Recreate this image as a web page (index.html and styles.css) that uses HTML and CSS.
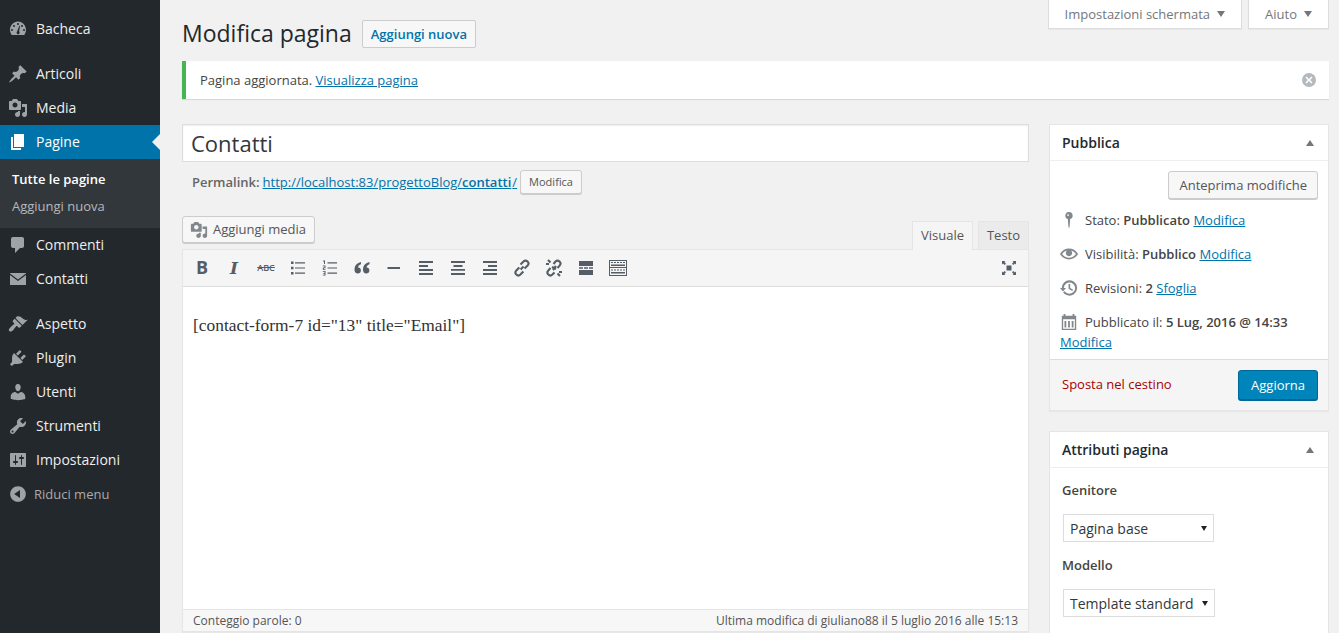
FILE: index.html
```html
<!DOCTYPE html>
<html lang="it">
<head>
<meta charset="utf-8">
<title>Modifica pagina</title>
<link rel="stylesheet" href="styles.css">
</head>
<body>
<div class="app">
  <nav class="side">
    <ul class="menu">
      <li class="item"><svg class="mi" viewBox="0 0 20 20"><path fill-rule="evenodd" d="M3.76 16h12.48c1.1-1.43 1.76-3.21 1.76-5.14 0-4.67-3.58-8.46-8-8.46s-8 3.79-8 8.46c0 1.93.66 3.71 1.76 5.14zM10 4a1 1 0 1 1 0 2 1 1 0 0 1 0-2zM6 6a1 1 0 1 1 0 2 1 1 0 0 1 0-2zm8 0a1 1 0 1 1 0 2 1 1 0 0 1 0-2zM4 10a1 1 0 1 1 0 2 1 1 0 0 1 0-2zm12 0a1 1 0 1 1 0 2 1 1 0 0 1 0-2zM11.5 6.5L12 7l-.9 5.6a1.5 1.5 0 1 1-2 0z"/></svg>Bacheca</li>
      <li class="item gap"><svg class="mi" viewBox="0 0 20 20"><path d="M10.44 3.02l1.82-1.82 6.36 6.35-1.83 1.82c-1.05-.68-2.48-.57-3.41.36l-.75.75c-.92.93-1.04 2.35-.35 3.41l-1.83 1.82-2.41-2.41-2.8 2.79c-.42.42-3.38 2.71-3.8 2.29s1.86-3.39 2.28-3.81l2.79-2.79L4.1 9.36l1.83-1.82c1.05.69 2.48.57 3.4-.36l.75-.75c.93-.92 1.05-2.35.36-3.41z"/></svg>Articoli</li>
      <li class="item"><svg class="mi" viewBox="0 0 20 20"><path fill-rule="evenodd" d="M13 11V4c0-.55-.45-1-1-1h-1.67L9 1H5L3.67 3H2c-.55 0-1 .45-1 1v7c0 .55.45 1 1 1h10c.55 0 1-.45 1-1zM7 4.5c1.38 0 2.5 1.12 2.5 2.5S8.38 9.5 7 9.5 4.5 8.38 4.5 7 5.62 4.5 7 4.5zM14 6h5v10.5c0 1.38-1.12 2.5-2.5 2.5S14 17.88 14 16.5s1.12-2.5 2.5-2.5c.17 0 .34.02.5.05V9h-3V6zm-4 8.05V13h2v3.5c0 1.38-1.12 2.5-2.5 2.5S7 17.88 7 16.5 8.12 14 9.5 14c.17 0 .34.02.5.05z"/></svg>Media</li>
      <li class="item current"><svg class="mi" viewBox="0 0 20 20"><path d="M6 15V2h10v13H6zm-1 1h8v2H3V5h2v11z"/></svg>Pagine</li>
      <li class="sub">
        <div class="sub-link sub-on">Tutte le pagine</div>
        <div class="sub-link">Aggiungi nuova</div>
      </li>
      <li class="item"><svg class="mi" viewBox="0 0 20 20"><path d="M5 2h9c1.1 0 2 .9 2 2v7c0 1.1-.9 2-2 2h-2l-5 5v-5H5c-1.1 0-2-.9-2-2V4c0-1.1.9-2 2-2z"/></svg>Commenti</li>
      <li class="item"><svg class="mi" viewBox="0 0 20 20"><path d="M2 4h16v.5L10 10.500 2 4.500zM2 6l8 6 8-6v10H2z"/></svg>Contatti</li>
      <li class="item gap"><svg class="mi" viewBox="0 0 20 20"><path d="M14.48 11.06L7.41 3.99l1.5-1.5c.5-.56 2.3-.47 3.51.32 1.21.8 1.43 1.28 2.91 2.1 1.18.64 2.45 1.26 4.45.85zm-.71.71L6.7 4.7 4.93 6.47c-.39.39-.39 1.02 0 1.41l1.06 1.06c.39.39.39 1.03 0 1.42-.6.6-1.43 1.11-2.21 1.69-.35.26-.7.53-1.01.84-1.34 1.34-1.99 2.31-1.99 3.16 0 .87.7 1.57 1.57 1.57.85 0 1.82-.65 3.16-1.99.31-.31.58-.66.84-1.01.58-.78 1.09-1.61 1.69-2.21.39-.39 1.03-.39 1.42 0l1.06 1.06c.39.39 1.02.39 1.41 0z"/></svg>Aspetto</li>
      <li class="item"><svg class="mi" viewBox="0 0 20 20"><path d="M13.11 4.36L9.87 7.6 8 5.73l3.24-3.24c.35-.34 1.05-.2 1.56.32.52.51.66 1.21.31 1.55zm-8 1.77l.91-1.12 9.01 9.01-1.19.84c-.71.71-2.63 1.16-3.82 1.16H6.14L4.9 17.26c-.59.59-1.54.59-2.12 0-.59-.58-.59-1.53 0-2.12l1.24-1.24v-3.88c0-1.13.4-3.19 1.09-3.89zm7.26 3.97l3.24-3.24c.34-.35 1.04-.21 1.55.31.52.51.66 1.21.31 1.55l-3.24 3.25z"/></svg>Plugin</li>
      <li class="item"><svg class="mi" viewBox="0 0 20 20"><path d="M10 9.25c-2.27 0-2.73-3.44-2.73-3.44C7 4.02 7.82 2 9.97 2c2.16 0 2.98 2.02 2.71 3.81 0 0-.41 3.44-2.68 3.44zm0 2.57L12.72 10c2.39 0 4.52 2.33 4.52 4.53v2.49s-3.65 1.13-7.24 1.13c-3.65 0-7.24-1.13-7.24-1.13v-2.49c0-2.25 1.94-4.48 4.47-4.48z"/></svg>Utenti</li>
      <li class="item"><svg class="mi" viewBox="0 0 20 20"><path fill-rule="evenodd" d="M16.68 9.77c-1.34 1.34-3.3 1.67-4.95.99l-5.41 6.52c-.99.99-2.59.99-3.58 0s-.99-2.59 0-3.57l6.52-5.42c-.68-1.65-.35-3.61.99-4.95 1.28-1.28 3.12-1.62 4.72-1.06l-2.89 2.89 2.82 2.82 2.86-2.87c.53 1.58.18 3.39-1.08 4.65zM3.81 16.21c.4.39 1.04.39 1.43 0 .4-.4.4-1.04 0-1.43-.39-.4-1.03-.4-1.43 0-.39.39-.39 1.03 0 1.43z"/></svg>Strumenti</li>
      <li class="item"><svg class="mi" viewBox="0 0 20 20"><path fill-rule="evenodd" d="M18 16V4c0-.55-.45-1-1-1H3c-.55 0-1 .45-1 1v12c0 .55.45 1 1 1h14c.55 0 1-.45 1-1zM8 11h1c.55 0 1 .45 1 1s-.45 1-1 1H8v1.5c0 .28-.22.5-.5.5s-.5-.22-.5-.5V13H6c-.55 0-1-.45-1-1s.45-1 1-1h1V5.5c0-.28.22-.5.5-.5s.5.22.5.5V11zm5-2h-1c-.55 0-1-.45-1-1s.45-1 1-1h1V5.5c0-.28.22-.5.5-.5s.5.22.5.5V7h1c.55 0 1 .45 1 1s-.45 1-1 1h-1v5.5c0 .28-.22.5-.5.5s-.5-.22-.5-.5V9z"/></svg>Impostazioni</li>
      <li class="collapse"><svg class="mi" viewBox="0 0 20 20"><path fill-rule="evenodd" d="M10 2.16c4.33 0 7.84 3.51 7.84 7.84s-3.51 7.84-7.84 7.84S2.16 14.33 2.16 10 5.71 2.16 10 2.16zm2 11.72V6.12L6.18 9.97z"/></svg>Riduci menu</li>
    </ul>
  </nav>

  <main class="content">
    <div class="screen-tabs">
      <div class="tab-btn">Impostazioni schermata<span class="caret"></span></div>
      <div class="tab-btn">Aiuto<span class="caret"></span></div>
    </div>
    <header class="head">
      <h1 class="title">Modifica pagina</h1>
      <span class="add-new">Aggiungi nuova</span>
    </header>
    <div class="notice">
      <p class="notice-text">Pagina aggiornata. <a class="link" href="#">Visualizza pagina</a></p>
      <svg class="dismiss" viewBox="0 0 20 20"><path fill-rule="evenodd" d="M10 3a7 7 0 1 1 0 14 7 7 0 0 1 0-14zm3.5 4.6L12.4 6.500 10 8.900 7.600 6.500 6.500 7.600 8.900 10l-2.400 2.400 1.100 1.100 2.400-2.400 2.400 2.400 1.100-1.100L11.100 10z"/></svg>
    </div>
    <div class="columns">
      <section class="main-col">
        <div class="title-input">Contatti</div>
        <div class="permalink">
          <strong class="perma-label">Permalink:</strong>
          <a class="link perma-url" href="#">http://localhost:83/progettoBlog/<b>contatti</b>/</a>
          <span class="btn-small">Modifica</span>
        </div>
        <div class="editor-top">
          <span class="media-btn"><svg class="media-ico" viewBox="0 0 20 20"><path fill-rule="evenodd" d="M13 11V4c0-.55-.45-1-1-1h-1.67L9 1H5L3.67 3H2c-.55 0-1 .45-1 1v7c0 .55.45 1 1 1h10c.55 0 1-.45 1-1zM7 4.5c1.38 0 2.5 1.12 2.5 2.5S8.38 9.5 7 9.5 4.5 8.38 4.5 7 5.62 4.5 7 4.5zM14 6h5v10.5c0 1.38-1.12 2.5-2.5 2.5S14 17.88 14 16.5s1.12-2.5 2.5-2.5c.17 0 .34.02.5.05V9h-3V6zm-4 8.05V13h2v3.5c0 1.38-1.12 2.5-2.5 2.5S7 17.88 7 16.5 8.12 14 9.5 14c.17 0 .34.02.5.05z"/></svg>Aggiungi media</span>
          <div class="tabs">
            <span class="ed-tab ed-on">Visuale</span>
            <span class="ed-tab">Testo</span>
          </div>
        </div>
        <div class="editor">
          <div class="toolbar">
            <div class="tools">
              <span class="tool tool-b">B</span>
              <span class="tool tool-i">I</span>
              <span class="tool tool-abc">ABC</span>
              <span class="tool"><svg class="ti" viewBox="0 0 16 16"><path d="M1 1.500h2.500V4H1zM1 6.800h2.500v2.500H1zM1 12h2.500v2.500H1zM5 2.300h10v1.200H5zM5 7.400h10v1.200H5zM5 12.600h10v1.200H5z"/></svg></span>
              <span class="tool"><svg class="ti" viewBox="0 0 16 16"><path d="M5.500 2.300H15v1.200H5.500zM5.500 7.400H15v1.200H5.500zM5.500 12.600H15v1.200H5.500zM1 .5h2v3.500H2V1.500H1zM.8 5.500h2.700v2.700H1.900v.7h1.600v.8H.8V7.600h1.700V6.300H.8zM.8 11h2.700v4.500H.8v-.8h1.700v-1H1.300v-.7h1.200v-1.200H.8z"/></svg></span>
              <span class="tool"><svg class="ti" viewBox="0 0 16 16"><path d="M7 2C3.200 2.800.5 5.300.5 9.800c0 2.300 1.300 3.700 3.200 3.700s3.200-1.300 3.200-3.100-1.300-3-2.900-2.800C4.200 6 5.300 4.800 7 4.200zM15.500 2c-3.800.8-6.500 3.300-6.500 7.800 0 2.300 1.300 3.700 3.200 3.700s3.200-1.300 3.200-3.100-1.300-3-2.900-2.800c.2-1.600 1.300-2.800 3-3.400z"/></svg></span>
              <span class="tool"><svg class="ti" viewBox="0 0 16 16"><path d="M1.500 7h12.500v2H1.500z"/></svg></span>
              <span class="tool"><svg class="ti" viewBox="0 0 16 16"><path d="M1 1h14v2H1zM1 5h9v2H1zM1 9h14v2H1zM1 13h14v2H1z"/></svg></span>
              <span class="tool"><svg class="ti" viewBox="0 0 16 16"><path d="M1 1h14v2H1zM3.500 5h9v2h-9zM1 9h14v1.800H1zM1 13h14v2H1z"/></svg></span>
              <span class="tool"><svg class="ti" viewBox="0 0 16 16"><path d="M1 1h14v2H1zM6 5h9v2H6zM1 9h14v2H1zM1 13h14v2H1z"/></svg></span>
              <span class="tool"><svg class="ti ti-big" viewBox="0 0 18 18"><path class="stroke" d="M7.600 10.400l3-3M6.300 8.500l-3 3a2.900 2.900 0 0 0 4.100 4.100l3-3M7.500 5.500l3-3a2.900 2.900 0 0 1 4.100 4.100l-3 3"/></svg></span>
              <span class="tool"><svg class="ti ti-big" viewBox="0 0 18 18"><path class="stroke" d="M5.500 9l-2.200 2.500a2.900 2.900 0 0 0 4.100 4.100L9.500 13.500M8.500 5l2-2.500a2.900 2.900 0 0 1 4.100 4.100L12.500 9M3 1l2.500 2.500M1 5h3M15 17l-2.500-2.500M14 13h3M7 8l4 2M11 7l-3 4"/></svg></span>
              <span class="tool"><svg class="ti ti-wide" viewBox="0 0 18 16"><path d="M2 1h14v5H2zM2 7.200h4v1.600H2zM7 7.200h4v1.600H7zM12 7.200h4v1.600h-4zM2 10h14v5H2z"/></svg></span>
              <span class="tool"><svg class="ti ti-kbd" viewBox="0 0 20 16"><path fill-rule="evenodd" d="M1 0h18v16H1zm1 1v6h16V1zm0 7v7h16V8zM3 2h2v1H3zm3 0h2v1H6zm3 0h2v1H9zm3 0h2v1h-2zm3 0h2v1h-2zM3 4.500h14v1.500H3zM3 9.500h2v1H3zm3 0h2v1H6zm3 0h2v1H9zm3 0h2v1h-2zm3 0h2v1h-2zM3 12h14v1.500H3z"/></svg></span>
            </div>
            <svg class="fullscreen" viewBox="0 0 16 16"><path d="M5.500 5.500h5v5h-5zM1 1h3.500L3.400 2.100 5 3.700 3.700 5 2.100 3.400 1 4.500zM15 1v3.500l-1.100-1.100L12.300 5 11 3.700l1.600-1.600L11.500 1zM1 15v-3.500l1.100 1.100L3.700 11 5 12.300l-1.600 1.600L4.500 15zM15 15h-3.500l1.100-1.100L11 12.300l1.300-1.300 1.600 1.600 1.100-1.100z"/></svg>
          </div>
          <div class="body-text">[contact-form-7 id="13" title="Email"]</div>
          <div class="status">
            <span>Conteggio parole: 0</span>
            <span>Ultima modifica di giuliano88 il 5 luglio 2016 alle 15:13</span>
          </div>
        </div>
      </section>

      <aside class="side-col">
        <section class="box">
          <div class="box-head"><h2 class="box-title">Pubblica</h2><span class="up"></span></div>
          <div class="pub-body">
            <div class="preview-row"><span class="btn">Anteprima modifiche</span></div>
            <div class="pub-row"><svg class="pi" viewBox="0 0 20 20"><path fill-rule="evenodd" d="M10 1a4 4 0 0 1 1.300 7.800L10.700 17 10 19.500 9.300 17l-.6-8.200A4 4 0 0 1 10 1zM9 3.500a1 1 0 1 0 0 2 1 1 0 0 0 0-2z"/></svg><span>Stato: <b>Pubblicato</b> <a class="link" href="#">Modifica</a></span></div>
            <div class="pub-row"><svg class="pi" viewBox="0 0 20 20"><path d="M19.700 9.400C17.700 6 14 3.900 10 3.900S2.300 6 .3 9.400L0 10l.3.6c2 3.400 5.700 5.500 9.700 5.500s7.700-2.100 9.700-5.500l.3-.6-.3-.6zM10 14.100c-3.100 0-6-1.600-7.700-4.100C3.600 8 5.700 6.600 8 6.100c-.9.6-1.500 1.700-1.500 2.900 0 1.900 1.600 3.500 3.500 3.500s3.500-1.600 3.500-3.500c0-1.200-.6-2.300-1.500-2.900 2.300.5 4.400 1.900 5.700 3.900-1.700 2.500-4.600 4.100-7.700 4.100z"/></svg><span>Visibilità: <b>Pubblico</b> <a class="link" href="#">Modifica</a></span></div>
            <div class="pub-row"><svg class="pi" viewBox="0 0 20 20"><path d="M10.500 1.500a8.500 8.500 0 1 1-7.100 13.200l1.800-1.200a6.300 6.300 0 1 0-1-3.500h2.500L3.300 14 0 10h2a8.500 8.500 0 0 1 8.500-8.500zM9.500 5.500h1.800v4.500l3.200 1.900-.9 1.500-4.100-2.500z"/></svg><span>Revisioni: <b>2</b> <a class="link" href="#">Sfoglia</a></span></div>
            <div class="pub-row pub-date"><svg class="pi" viewBox="0 0 20 20"><path fill-rule="evenodd" d="M4 1h2v2h8V1h2v2h2v16H2V3h2zM3.500 7v10.500h13V7zM5 9h2v7H5zM9 9h2v7H9zM13 9h2v7h-2z"/></svg><span>Pubblicato il: <b>5 Lug, 2016 @ 14:33</b></span><a class="link date-edit" href="#">Modifica</a></div>
          </div>
          <div class="pub-foot">
            <a class="trash" href="#">Sposta nel cestino</a>
            <span class="btn-primary">Aggiorna</span>
          </div>
        </section>
        <section class="box box-last">
          <div class="box-head"><h2 class="box-title">Attributi pagina</h2><span class="up"></span></div>
          <div class="attr-body">
            <p class="attr-label">Genitore</p>
            <div class="select sel-a">Pagina base<span class="sel-caret"></span></div>
            <p class="attr-label attr-second">Modello</p>
            <div class="select sel-b">Template standard<span class="sel-caret"></span></div>
          </div>
        </section>
      </aside>
    </div>
  </main>
</div>
</body>
</html>
```

FILE: styles.css
```css
* { box-sizing: border-box; }
html, body { margin: 0; height: 633px; overflow: hidden; }
body { background: #f1f1f1; color: #444; font: 13px/1.4 "Open Sans", sans-serif; }
.app { display: flex; height: 633px; }
ul { list-style: none; margin: 0; padding: 0; }
.link { color: #0073aa; text-decoration: underline; }

.side { width: 160px; flex: none; background: #23282d; color: #eee; font-size: 14px; padding-top: 12px; }
.item { height: 34px; display: flex; align-items: center; padding-left: 8px; gap: 8px; position: relative; }
.mi { width: 20px; height: 20px; fill: #9ea3a8; flex: none; }
.gap { margin-top: 11px; }
.current { background: #0073aa; color: #fff; }
.current .mi { fill: #fff; }
.current::after { content: ""; position: absolute; right: 0; top: 9px; border: 8px solid transparent; border-right-color: #f1f1f1; border-left-width: 0; }
.sub { background: #32373c; padding: 6px 0 9px; }
.sub-link { font-size: 13px; line-height: 18px; padding: 5px 12px 4px; color: #b4b9be; }
.sub-on { color: #fff; font-weight: 600; }
.collapse { height: 34px; display: flex; align-items: center; gap: 6px; padding-left: 8px; font-size: 13px; color: #aaa; }

.content { flex: 1; min-width: 0; padding: 0 10px 0 22px; position: relative; }
.screen-tabs { position: absolute; top: 0; right: 10px; display: flex; gap: 6px; }
.tab-btn { height: 29px; background: #fff; border: 1px solid #ddd; border-top: 0; padding: 0 16px; line-height: 28px; color: #72777c; box-shadow: 0 1px 1px rgba(0,0,0,.04); display: flex; align-items: center; gap: 7px; }
.caret { width: 0; height: 0; border: 4.5px solid transparent; border-top: 6px solid #72777c; border-bottom: 0; }

.head { display: flex; align-items: center; gap: 10px; padding-top: 16px; height: 50px; }
.title { margin: 0; font-size: 23px; font-weight: 400; line-height: 34px; color: #23282d; }
.add-new { height: 28px; margin-top: 2px; border: 1px solid #ccc; border-radius: 2px; background: #f7f7f7; color: #0073aa; font-weight: 600; line-height: 26px; padding: 0 8px; }

.notice { margin-top: 11px; height: 38px; background: #fff; border-left: 4px solid #46b450; box-shadow: 0 1px 1px rgba(0,0,0,.1); display: flex; align-items: center; justify-content: space-between; padding: 0 12px 0 14px; margin-bottom: 25px; }
.notice-text { margin: 0; color: #444; }
.dismiss { width: 20px; height: 20px; fill: #b4b9be; margin-right: -2px; }

.columns { display: flex; gap: 20px; align-items: flex-start; }
.main-col { flex: 1; min-width: 0; }
.side-col { width: 280px; flex: none; }

.title-input { height: 38px; background: #fff; border: 1px solid #ddd; font-size: 22px; line-height: 36px; padding: 0 8px; color: #32373c; box-shadow: inset 0 1px 2px rgba(0,0,0,.07); }
.permalink { display: flex; align-items: center; gap: 3px; padding-left: 10px; margin-top: 7px; height: 26px; color: #666; }
.perma-label { font-weight: 600; }
.perma-url b { font-weight: 600; margin-right: 1px; }
.btn-small { height: 24px; line-height: 22px; border: 1px solid #ccc; border-radius: 3px; background: #f7f7f7; font-size: 11px; padding: 0 8px; color: #555; box-shadow: 0 1px 0 #ccc; }

.editor-top { display: flex; justify-content: space-between; align-items: flex-end; margin-top: 21px; height: 33px; }
.media-btn { height: 27px; align-self: flex-start; border: 1px solid #ccc; border-radius: 3px; background: #f7f7f7; box-shadow: 0 1px 0 #ccc; color: #555; display: flex; align-items: center; gap: 5px; padding: 0 8px 0 7px; }
.media-ico { width: 18px; height: 18px; fill: #82878c; }
.tabs { display: flex; gap: 5px; align-items: flex-end; }
.ed-tab { height: 28px; width: 51px; background: #ebebeb; border: 1px solid #e5e5e5; border-bottom: 0; text-align: center; line-height: 27px; color: #555; }
.ed-on { width: 61px; height: 29px; background: #f5f5f5; margin-bottom: -1px; position: relative; }

.editor { height: 383px; display: flex; flex-direction: column; background: #fff; border: 1px solid #e5e5e5; box-shadow: 0 1px 1px rgba(0,0,0,.04); }
.toolbar { height: 37px; flex: none; background: #f5f5f5; border-bottom: 1px solid #ddd; display: flex; align-items: center; justify-content: space-between; padding: 0 11px 0 3px; }
.tools { display: flex; align-items: center; }
.tool { width: 32px; height: 30px; display: flex; align-items: center; justify-content: center; color: #555d66; }
.tool-b { font-size: 18px; font-weight: 700; }
.tool-i { font: italic 700 17px "DejaVu Serif", serif; }
.tool-abc { font-size: 9px; font-weight: 600; text-decoration: line-through; }
.ti { width: 16px; height: 16px; fill: #555d66; }
.ti-big { width: 18px; height: 18px; }
.ti-wide { width: 18px; height: 16px; }
.ti-kbd { width: 20px; height: 16px; }
.stroke { fill: none; stroke: #555d66; stroke-width: 2.100; }
.fullscreen { width: 16px; height: 16px; fill: #555d66; }
.body-text { flex: 1; font: 17.4px/26px "Liberation Serif", serif; color: #333; padding: 25px 10px; }
.status { flex: none; height: 22px; border-top: 1px solid #e5e5e5; background: #f7f7f7; display: flex; align-items: center; justify-content: space-between; padding: 2px 10px 0; font-size: 12px; color: #555; }

.box { background: #fff; border: 1px solid #e5e5e5; box-shadow: 0 1px 1px rgba(0,0,0,.04); margin-bottom: 20px; }
.box-last { margin-bottom: 0; border-bottom: 0; box-shadow: none; }
.box-head { height: 36px; display: flex; align-items: center; justify-content: space-between; padding: 0 12px; border-bottom: 1px solid #eee; }
.box-title { margin: 0; font-size: 14px; font-weight: 600; color: #23282d; }
.up { width: 0; height: 0; border: 4.5px solid transparent; border-bottom: 6px solid #72777c; border-top: 0; margin-right: 2px; }
.pub-body { padding: 10px 10px 8px; }
.preview-row { display: flex; justify-content: flex-end; margin-bottom: 4px; }
.btn { height: 28px; line-height: 26px; border: 1px solid #ccc; border-radius: 3px; background: #f7f7f7; box-shadow: 0 1px 0 #ccc; color: #555; padding: 0 10px; }
.pub-row { display: flex; align-items: center; gap: 7px; height: 34px; color: #444; }
.pub-row b { font-weight: 600; }
.pi { width: 18px; height: 18px; fill: #82878c; flex: none; }
.pub-date { height: 46px; flex-wrap: wrap; align-items: flex-start; row-gap: 2px; padding-top: 8px; line-height: 18px; }
.date-edit { flex-basis: 100%; }
.pub-foot { height: 51px; background: #f5f5f5; border-top: 1px solid #ddd; display: flex; align-items: center; justify-content: space-between; padding: 0 10px 0 12px; }
.trash { color: #a00; text-decoration: none; margin-top: -2px; }
.btn-primary { height: 30px; line-height: 28px; background: #0085ba; border: 1px solid #006799; border-radius: 3px; color: #fff; padding: 0 12px; box-shadow: 0 1px 0 #006799; }
.attr-body { padding: 0 12px 16px; }
.attr-label { margin: 0; padding-top: 13px; font-weight: 600; line-height: 19px; color: #444; }
.attr-second { padding-top: 14px; }
.select { height: 28px; margin: 14px 0 0 1px; border: 1px solid #ddd; background: #fff; font-size: 14px; line-height: 26px; padding: 1px 6px 0; color: #32373c; display: flex; align-items: center; justify-content: space-between; }
.sel-a { width: 151px; }
.sel-b { width: 152px; }
.sel-caret { width: 0; height: 0; border: 3.5px solid transparent; border-top: 5px solid #222; border-bottom: 0; }
```
